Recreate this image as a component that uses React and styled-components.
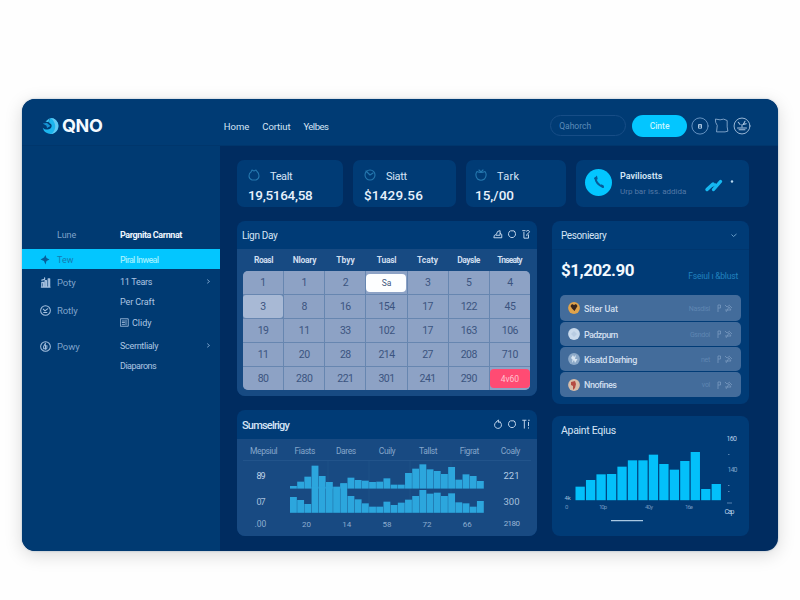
import React from "react";
import styled, { createGlobalStyle } from "styled-components";

const GlobalStyle = createGlobalStyle`
  * { box-sizing: border-box; }
  body { margin: 0; background: #fefefe; font-family: Roboto, "Noto Sans", sans-serif; }
`;

const Page = styled.div`
  width: 800px;
  height: 600px;
  padding: 99px 22px 0;
  overflow: hidden;
`;
const Window = styled.div`
  width: 756px;
  height: 452px;
  border-radius: 13px;
  overflow: hidden;
  background: #002c60;
  box-shadow: 0 4px 18px rgba(0, 0, 0, 0.15), 0 0 2px rgba(90, 130, 170, 0.5);
  display: grid;
  grid-template: 47px 1fr / 198px 1fr;
`;
const Text = styled.span`
  display: inline-block;
  white-space: nowrap;
  line-height: 1;
  padding-top: 2px;
  font-size: ${(p) => p.$size || 9}px;
  font-weight: ${(p) => p.$weight || 400};
  color: ${(p) => p.$color || "#d5e4f5"};
  letter-spacing: ${(p) => p.$track || 0}px;
`;
const Wordmark = styled.span`
  font: 700 18px/1 Inter, sans-serif;
  letter-spacing: -0.4px;
  color: #f4faff;
`;

const Header = styled.header`
  grid-column: 1 / 3;
  display: flex;
  align-items: center;
  height: 47px;
  padding: 7px 27px 0 20px;
  background: #003b74;
  border-bottom: 1px solid #00366c;
`;
const Brand = styled.div`
  display: flex;
  align-items: center;
  gap: 3px;
  width: 182px;
  height: 20px;
`;
const Nav = styled.nav`
  display: flex;
  gap: 13px;
  width: 327px;
`;
const Search = styled.div`
  width: 76px;
  height: 21px;
  border: 1px solid #174d86;
  border-radius: 11px;
  padding-left: 8px;
  display: flex;
  align-items: center;
`;
const Cta = styled.button`
  width: 55px;
  height: 22px;
  margin: 0 4px 0 6px;
  padding: 0 0 2px;
  border: 0;
  border-radius: 11px;
  background: #03c6ff;
  font-family: inherit;
`;
const HeaderIcons = styled.div`
  display: flex;
  align-items: center;
  gap: 3.5px;
`;

const Sidebar = styled.aside`
  background: #003a72;
  padding-top: 77px;
`;
const SideRow = styled.div`
  display: grid;
  grid-template-columns: 35px 63px 1fr;
  align-items: center;
  height: ${(p) => p.$h}px;
  margin-bottom: ${(p) => (p.$active ? 0 : 3)}px;
  background: ${(p) => (p.$active ? "#03c6ff" : "transparent")};
`;
const SideColumns = styled.div`
  display: grid;
  grid-template-columns: 98px 1fr;
`;
const SideItem = styled.div`
  display: flex;
  align-items: center;
  height: ${(p) => p.$h}px;
`;
const SideIcon = styled.span`
  display: flex;
  width: 35px;
  padding-left: 18px;
`;
const SubItem = styled.div`
  display: flex;
  align-items: center;
  justify-content: space-between;
  height: ${(p) => p.$h}px;
  padding-right: 9px;
`;
const SubLabel = styled.span`
  display: flex;
  gap: 3px;
  align-items: center;
`;

const Main = styled.main`
  padding: 14px 29px 0 17px;
`;
const Stats = styled.section`
  display: grid;
  grid-template-columns: 106px 103px 100px 173px;
  justify-content: space-between;
  height: 47px;
`;
const StatCard = styled.article`
  border-radius: 7px;
  background: #003b75;
  padding: 8px 0 0 ${(p) => p.$left || 11}px;
`;
const StatHead = styled.div`
  display: flex;
  align-items: center;
  gap: 10px;
  height: 14px;
`;
const StatValue = styled.div`
  display: flex;
  align-items: center;
  height: 14px;
  margin-top: 6px;
`;
const CallCard = styled.article`
  border-radius: 7px;
  background: #003b75;
  display: flex;
  align-items: center;
  padding: 0 12px 0 9px;
`;
const CallBadge = styled.div`
  width: 27px;
  height: 27px;
  border-radius: 50%;
  background: #03c6ff;
  display: grid;
  place-items: center;
  margin-right: 8px;
  margin-top: -3px;
`;
const CallText = styled.div`
  width: 83px;
  display: flex;
  flex-direction: column;
  gap: 5px;
  margin-top: -1px;
`;

const Board = styled.div`
  display: grid;
  grid-template-columns: 300px 197px;
  gap: 15px;
  margin-top: 14px;
`;
const Column = styled.div`
  display: flex;
  flex-direction: column;
  gap: ${(p) => p.$gap}px;
`;
const Panel = styled.section`
  height: ${(p) => p.$h}px;
  border-radius: 8px;
  overflow: hidden;
  background: #003b76;
`;
const PanelHead = styled.div`
  height: ${(p) => p.$h}px;
  display: flex;
  align-items: center;
  justify-content: space-between;
  padding: 0 ${(p) => p.$right || 6}px 0 ${(p) => p.$left || 5}px;
`;
const Tools = styled.span`
  display: flex;
  gap: 4px;
  margin-top: -2px;
`;
const CalendarBody = styled.div`
  height: 147px;
  padding: 0 7px 0 6px;
  background: #174a82;
`;
const SevenCols = styled.div`
  display: grid;
  grid-template-columns: repeat(7, 1fr);
  height: ${(p) => p.$h}px;
  padding-bottom: 2px;
  align-items: center;
  justify-items: center;
`;
const Days = styled.div`
  display: grid;
  grid-template: repeat(5, 1fr) / repeat(7, 1fr);
  gap: 1px;
  height: 119px;
  border-radius: 5px;
  overflow: hidden;
  background: #6786b0;
`;
const Day = styled.div`
  display: grid;
  place-items: center;
  background: ${(p) => (p.$soft ? "#a8b9d5" : "#8da2c5")};
  border-radius: ${(p) => (p.$soft ? "3px" : 0)};
`;
const DayPill = styled.div`
  width: 40px;
  height: ${(p) => (p.$red ? 19 : 18)}px;
  border-radius: 4px;
  display: grid;
  place-items: center;
  background: ${(p) => (p.$red ? "#ff4b73" : "#fdfeff")};
`;

const SummaryBody = styled.div`
  height: 97px;
  background: #184a82;
  padding: 0 6px;
`;
const SummaryHead = styled.div`
  display: grid;
  grid-template-columns: repeat(7, 1fr);
  justify-items: center;
  align-items: center;
  height: 22px;
  padding-top: 2px;
  border-bottom: 1px solid #22548b;
`;
const SummaryGrid = styled.div`
  display: grid;
  grid-template-columns: 35px 1fr 39px;
  height: 74px;
`;
const ValueColumn = styled.div`
  display: grid;
  grid-template-rows: 28px 24px 20px;
  justify-items: center;
  align-items: center;
`;
const Drawing = styled.svg`
  display: block;
  overflow: visible;
`;

const Balance = styled.div`
  display: flex;
  justify-content: space-between;
  align-items: center;
  height: 46px;
  padding: 0 11px 6px 9px;
  border-top: 1px solid #00366e;
`;
const PeriodNote = styled.div`
  padding-top: 12px;
  display: flex;
`;
const People = styled.div`
  display: flex;
  flex-direction: column;
  gap: 1px;
  padding: 0 8px;
`;
const Person = styled.div`
  display: flex;
  align-items: center;
  height: ${(p) => p.$h}px;
  padding: 0 8px;
  border-radius: 5px;
  background: #436c9b;
`;
const PersonName = styled.div`
  flex: 1;
  padding-left: 4px;
  display: flex;
`;
const PersonMeta = styled.div`
  display: flex;
  align-items: center;
  gap: 6px;
`;

const T = ({ s, w, c, t, children }) => (
  <Text $size={s} $weight={w} $color={c} $track={t}>{children}</Text>
);

const Logo = () => (
  <svg width="17" height="18" viewBox="0 0 17 18">
    <path d="M8.500 1a8 8 0 1 1-7.800 9.700c2 2 5.500 2.700 7.700.8 2-1.800 1.500-4.500-.7-5.200C6.600 5.500 6.900 3 8.500 1Z" fill="#1cb5ee" />
    <path d="M8.500 1c4.500 0 7.800 3.500 7.800 8 0 4-3 7.400-7 8 3.500-2.500 4.900-7 3.200-11C11.600 3.800 10.500 2 8.500 1Z" fill="#63c9f2" />
    <path d="M7.800 1 6.500 5.200 3.500 4.500Z" fill="#3fc0f0" />
    <path d="M.700 6.500 5 6l3.500 3L5 11 4.500 8.800Z" fill="#1593d5" />
  </svg>
);

const LineIcon = ({ size = 9, color = "#cfe0f3", children }) => (
  <svg width={size} height={size} viewBox="0 0 12 12" fill="none" stroke={color} strokeWidth="1.100" strokeLinecap="round" strokeLinejoin="round">
    {children}
  </svg>
);

const PanelTools = ({ round }) => (
  <Tools>
    <LineIcon size={10}>
      {round ? <path d="M4.500 3.200a4.200 4.200 0 1 0 4 .500M4.500 3.200 6.500 1v3l2-.5" /> : <path d="M1.500 10.500h9V6.500L8.500 5V2L5.500 3 4 6.500 2 7.500ZM4 7.500h4.500V5" />}
    </LineIcon>
    <LineIcon size={10}><path d="M3.500 2.500a4.300 4.300 0 1 0 5 0M4.500 2.200h3.500l1.500 1" /></LineIcon>
    <LineIcon size={10}>
      {round ? <path d="M2 1.500h4M4 2v9M9 4v4M9 10.500v.5M9 1.500h1" /> : <path d="M2 2h3M3.500 4v7H9V7M6.500 2.500c2-2 5 0 3 2L7 6.500V8" />}
    </LineIcon>
  </Tools>
);

const Chevron = () => (
  <svg width="5" height="7" viewBox="0 0 5 7"><path d="M1.200 1.500 3.500 3.500 1.200 5.300" fill="none" stroke="#7fa6cf" strokeWidth=".900" /></svg>
);

const sideItems = [
  { label: "Poty", h: 26, icon: <path d="M2 11V6h2v5M5.500 11V4h1.500v7M9 11V2h1.500v9M2 3.500l3-1V1M1.500 11h9.500" strokeWidth="1.400" /> },
  { label: "Rotly", h: 30, icon: <><circle cx="6" cy="6" r="5.300" /><path d="M3.500 4.500 5.500 6.500 8.500 4M4 8.200h3.500" /></> },
  { label: "Powy", h: 42, icon: <><circle cx="6" cy="6" r="5.300" /><path d="M6 2.500 4 6v2.500h3.500M6 4v5M7.500 5v2" /></> },
];

const subItems = [
  { label: "11 Tears", h: 24, arrow: true, t: -0.3 },
  { label: "Per Craft", h: 16, t: -0.1 },
  { label: "Clidy", h: 26, boxed: true },
  { label: "Scerntlialy", h: 20, arrow: true, t: -0.3 },
  { label: "Diaparons", h: 20, t: -0.5 },
];

const weekdays = [
  { label: "Roasl", t: -0.5 },
  { label: "Nloary", t: -0.3 },
  { label: "Tbyy" },
  { label: "Tuasl", t: -0.3 },
  { label: "Tcaty" },
  { label: "Daysle", t: -0.5 },
  { label: "Tnseaty", t: -0.8 },
];
const days = [
  ["1", "1", "2", "Sa", "3", "5", "4"],
  ["3", "8", "16", "154", "17", "122", "45"],
  ["19", "11", "33", "102", "17", "163", "106"],
  ["11", "20", "28", "214", "27", "208", "710"],
  ["80", "280", "221", "301", "241", "290", "4v60"],
];

function DayValue({ value }) {
  const red = value === "4v60";
  if (!red && value !== "Sa") return <T s={10.5} c="#3b5480" t={-0.5}>{value}</T>;
  return (
    <DayPill $red={red}>
      <T s={8.5} c={red ? "#ffc3d0" : "#41577c"}>{value}</T>
    </DayPill>
  );
}

const upperBars = [258, 245, 230, 197, 228, 246, 270, 250, 233, 240, 242, 246, 245, 235, 254, 254, 219, 206, 193, 208, 213, 222, 201, 239, 223, 228, 243];
const lowerBars = [291, 300, 312, 260, 260, 260, 260, 250, 288, 298, 310, 320, 320, 305, 315, 308, 299, 288, 270, 281, 278, 288, 280, 307, 310, 320, 303];

function SummaryChart() {
  return (
    <Drawing width="214" height="74" viewBox="0 0 214 74">
      <g stroke="#22548b" strokeWidth="0.600">
        <path d="M50 0V50M91 0V50M132 0V50M173 0V50" />
      </g>
      <g fill="#2ca6dd">
        {upperBars.map((top, i) => (
          <rect key={i} x={12 + i * 7.19} y={top / 3 - 61} width="6.850" height={Math.max(0, 88.6 - top / 3)} />
        ))}
        {lowerBars.map((top, i) => (
          <rect key={i} x={12 + i * 7.19} y={top / 3 - 61} width="6.850" height={112.8 - top / 3} />
        ))}
      </g>
      <g fill="#8cadd0" fontSize="8" textAnchor="middle">
        {["20", "14", "58", "72", "66"].map((v, i) => <text key={i} x={28.5 + i * 40.2} y="66">{v}</text>)}
      </g>
    </Drawing>
  );
}

const equityBars = [245, 225, 208, 207, 185, 166, 166, 149, 177, 194, 168, 141, 252, 237];

function EquityChart() {
  return (
    <Drawing width="197" height="92" viewBox="0 0 197 92">
      <g fill="#03c0fa">
        {equityBars.map((top, i) => (
          <rect key={i} x={23.5 + i * 10.47} y={top / 3 - 39} width="9.300" height={95.2 - top / 3} />
        ))}
      </g>
      <g fill="#6d95bf" fontSize="6">
        <text x="12.500" y="56" fill="#9dbbda">4k</text>
        <text x="13" y="65">0</text>
        <text x="47" y="65" textLength="8">10p</text>
        <text x="93" y="65" textLength="8">40y</text>
        <text x="133" y="65" textLength="8">16e</text>
      </g>
      <g fill="#b8cee6" fontSize="7">
        <text x="174.500" y="-3" textLength="10.500">160</text>
        <text x="175.500" y="28" fill="#7da3ca" textLength="10">140</text>
        <text x="172.500" y="70" textLength="10">Cap</text>
      </g>
      <path d="M176 10.500h1.500M176 41.500h1.500M176 47.500h1.500M175 59h5" stroke="#6d95bf" strokeWidth=".800" />
      <path d="M59 76.700h32" stroke="#a9c8e2" strokeWidth="1.300" />
    </Drawing>
  );
}

const people = [
  { name: "Siter Uat", meta: "Nasdisl", h: 26, bg: "#e0a34b", fg: "#37251e", hair: "M2.500 4 4 2 6 3 8 2 9.500 4 8 6.500 6.500 9 4 6.500Z", t: -0.1 },
  { name: "Padzpurn", meta: "Gsndol", h: 24, bg: "#c9daec", fg: "#b8cce2", hair: "M6 3 9 6 6 9 3 6Z", t: -0.6 },
  { name: "Kisatd Darhing", meta: "net", h: 24, bg: "#8ca9c8", fg: "#d9e6f2", hair: "M3 5 5 2 6 4 8 2 7 6 9.500 6 7 10 6 7 4 10 4.500 6.500Z", t: -0.45 },
  { name: "Nnofines", meta: "vol", h: 25, bg: "#d8bda9", fg: "#b54b43", hair: "M3 3 7 2 8 5 7 9 5 11 5 7 3 6Z", t: -0.5 },
];

const Avatar = ({ bg, fg, hair }) => (
  <svg width="12" height="12" viewBox="0 0 12 12">
    <circle cx="6" cy="6" r="5.900" fill={bg} />
    <path d={hair} fill={fg} />
  </svg>
);

export default function App() {
  return (
    <Page>
      <GlobalStyle />
      <Window>
        <Header>
          <Brand><Logo /><Wordmark>QNO</Wordmark></Brand>
          <Nav>
            <T s={9.5}>Home</T><T s={9.5} t={-0.1}>Cortiut</T><T s={9.5} t={-0.5}>Yelbes</T>
          </Nav>
          <Search><T s={8.5} c="#5d8cb9">Qahorch</T></Search>
          <Cta><T s={8.5} w={500} c="#c5f5ff">Cinte</T></Cta>
          <HeaderIcons>
            <LineIcon size={18} color="#6f9cc9"><circle cx="6" cy="6" r="5.400" strokeWidth=".600" /><path d="M5 7.200V5h2v2.200ZM5.300 6h1.500" stroke="#b9d0e8" strokeWidth=".600" /></LineIcon>
            <LineIcon size={17} color="#8fb1d4"><path d="M2 1.500 5 2l2.500-.500 2.500 1V7l.500 3-2 .5H2.500L3 6 2 4Z" strokeWidth=".600" /></LineIcon>
            <LineIcon size={18} color="#a9c4e0"><circle cx="6" cy="6" r="5.300" strokeWidth=".600" /><path d="m3.500 3.500 1.200 1.500M8 2.800 6.800 5l2-.500M3 7.300h6M4 8.500h4M6 5v1.500" strokeWidth=".700" /></LineIcon>
          </HeaderIcons>
        </Header>

        <Sidebar>
          <SideRow $h={23}>
            <span /><T s={9} c="#7fa3ca">Lune</T><T s={9} w={700} c="#eef6ff" t={-0.4}>Pargnita Carnnat</T>
          </SideRow>
          <SideRow $h={20} $active>
            <SideIcon>
              <svg width="11" height="11" viewBox="0 0 11 11"><path d="M.500 5.500 4 3.500 5.500 1l1 3 3 1.500-3 1.500-1 3.500-1.500-3.500Z" fill="#075e9a" /></svg>
            </SideIcon>
            <T s={9} c="#147bb2">Tew</T><T s={9} w={500} c="#9aefff" t={-0.7}>Piral Inweal</T>
          </SideRow>
          <SideColumns>
            <div>
              {sideItems.map((item) => (
                <SideItem key={item.label} $h={item.h}>
                  <SideIcon><LineIcon size={11} color="#a6c1df">{item.icon}</LineIcon></SideIcon>
                  <T s={9.5} c="#7fa3ca" t={-0.1}>{item.label}</T>
                </SideItem>
              ))}
            </div>
            <div>
              {subItems.map((item) => (
                <SubItem key={item.label} $h={item.h}>
                  <SubLabel>
                    {item.boxed && <LineIcon size={9} color="#a6c1df"><path d="M1 1h10v10H1ZM3 4h3M8 3v6M3 6h3M3 8.500h3" /></LineIcon>}
                    <T s={9} c="#aec6e2" t={item.t}>{item.label}</T>
                  </SubLabel>
                  {item.arrow && <Chevron />}
                </SubItem>
              ))}
            </div>
          </SideColumns>
        </Sidebar>

        <Main>
          <Stats>
            <StatCard>
              <StatHead><LineIcon size={12} color="#2477ae"><path d="M3 3Q1 4 1 7t3 4h4q3-1 3-4T9 2.500L8 1 6 2 4 1Z" /></LineIcon><T s={11} t={-0.4}>Tealt</T></StatHead>
              <StatValue><T s={13.5} w={500} c="#e8f2fc" t={-0.3}>19,5164,58</T></StatValue>
            </StatCard>
            <StatCard>
              <StatHead><LineIcon size={12} color="#2477ae"><circle cx="6" cy="6" r="5" /><path d="m2 2 4 4 3-2" /></LineIcon><T s={11} t={-0.3}>Siatt</T></StatHead>
              <StatValue><T s={13.5} w={500} c="#e8f2fc" t={0.2}>$1429.56</T></StatValue>
            </StatCard>
            <StatCard $left={9}>
              <StatHead><LineIcon size={12} color="#2477ae"><path d="M2 2.500Q6 4.500 10 2.500 12.500 6 9.500 10 6 12.500 2.500 10-.500 6 2 2.500M4 1l2 2 2-2" /></LineIcon><T s={11} t={0.3}>Tark</T></StatHead>
              <StatValue><T s={13.5} w={500} c="#e8f2fc">15,/00</T></StatValue>
            </StatCard>
            <CallCard>
              <CallBadge>
                <svg width="15" height="15" viewBox="0 0 15 15"><path d="M4.500 3Q4.500 8.500 12 12" fill="none" stroke="#075b98" strokeWidth="2" strokeLinecap="round" /><path d="m3.500 4 2-2 .500 2.500M10 10l2.500 1.500" stroke="#075b98" strokeWidth="1.500" fill="none" /></svg>
              </CallBadge>
              <CallText>
                <T s={9} w={600} c="#d6e7f7">Paviliostts</T>
                <T s={8} c="#5379a7">Urp bar iss. addida</T>
              </CallText>
              <svg width="32" height="18" viewBox="0 0 32 18">
                <path d="m4 14.500 6-5.500M10.500 14.500l7-8" stroke="#16b8f1" strokeWidth="3.400" strokeLinecap="round" />
                <path d="m9 11 4-2" stroke="#16b8f1" strokeWidth="2.500" />
                <circle cx="29" cy="6.500" r="1.200" fill="#b8d8ef" />
              </svg>
            </CallCard>
          </Stats>

          <Board>
            <Column $gap={14}>
              <Panel $h={175}>
                <PanelHead $h={28}><T s={10} t={-0.35}>Lign Day</T><PanelTools /></PanelHead>
                <CalendarBody>
                  <SevenCols $h={22}>{weekdays.map((d) => <T key={d.label} s={8.5} w={700} c="#cfdeef" t={d.t}>{d.label}</T>)}</SevenCols>
                  <Days>
                    {days.flat().map((value, i) => (
                      <Day key={i} $soft={i === 7}><DayValue value={value} /></Day>
                    ))}
                  </Days>
                </CalendarBody>
              </Panel>
              <Panel $h={126}>
                <PanelHead $h={29}><T s={11} w={500} t={-0.8}>Sumselrigy</T><PanelTools round /></PanelHead>
                <SummaryBody>
                  <SummaryHead>
                    {["Mepsiul", "Fiasts", "Dares", "Cuily", "Tallst", "Figrat", "Coaly"].map((d) => <T key={d} s={8.5} c="#85a6ca" t={-0.4}>{d}</T>)}
                  </SummaryHead>
                  <SummaryGrid>
                    <ValueColumn>
                      <T s={9} c="#c1d4e9" t={-1}>89</T><T s={9} c="#a6c0dc" t={-1}>07</T><T s={8.5} c="#8cadd0">.00</T>
                    </ValueColumn>
                    <SummaryChart />
                    <ValueColumn>
                      <T s={9.5} c="#b5cbe4">221</T><T s={9.5} c="#a6c0dc">300</T><T s={8} c="#9ab7d6" t={-0.6}>2180</T>
                    </ValueColumn>
                  </SummaryGrid>
                </SummaryBody>
              </Panel>
            </Column>

            <Column $gap={12}>
              <Panel $h={183}>
                <PanelHead $h={28} $left={9} $right={12}>
                  <T s={10} t={-0.4}>Pesonieary</T>
                  <svg width="6" height="5" viewBox="0 0 6 5"><path d="m.500 1.500 2 2 3-2.500" fill="none" stroke="#82b5dc" strokeWidth=".800" /></svg>
                </PanelHead>
                <Balance>
                  <T s={17} w={700} c="#f2f9ff" t={-0.5}>$1,202.90</T>
                  <PeriodNote><T s={8.5} c="#2182bf" t={-0.2}>Fseiul ı &amp;blust</T></PeriodNote>
                </Balance>
                <People>
                  {people.map((p) => (
                    <Person key={p.name} $h={p.h}>
                      <Avatar bg={p.bg} fg={p.fg} hair={p.hair} />
                      <PersonName><T s={9} w={500} c="#d0deee" t={p.t}>{p.name}</T></PersonName>
                      <PersonMeta>
                        <T s={7} c="#5f86b2" t={-0.3}>{p.meta}</T>
                        <svg width="17" height="10" viewBox="0 0 17 10" fill="none" stroke="#7899bf" strokeWidth=".800">
                          <path d="M2 9V2h2.500v3H2M9 2l2 2 3-2M9 7h6l-2-3-3 5M14 3l2 2" />
                        </svg>
                      </PersonMeta>
                    </Person>
                  ))}
                </People>
              </Panel>
              <Panel $h={120}>
                <PanelHead $h={28} $left={9}><T s={10.5} t={-0.3}>Apaint Eqius</T></PanelHead>
                <EquityChart />
              </Panel>
            </Column>
          </Board>
        </Main>
      </Window>
    </Page>
  );
}
